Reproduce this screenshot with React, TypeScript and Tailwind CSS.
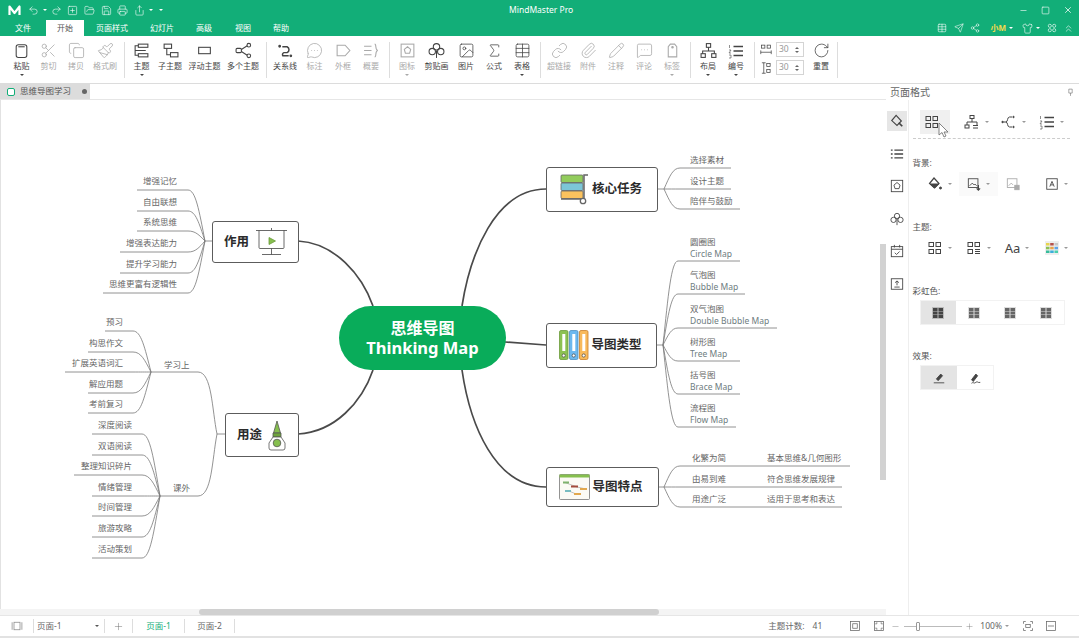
import { ReactNode } from 'react'
import {
  ChevronsUp, Copy, Image, Link, MessageCircleMore, MessageSquareMore, Minus, Paintbrush, Paperclip,
  Pencil, Plus, RotateCw, Scissors, Send, Share2, Shirt, Sigma, Table, X, Square,
  Undo2, Redo2, Printer, FolderOpen, Save, SquarePlus, Share,
} from 'lucide-react'

const FONT = '"Noto Sans", "Noto Sans CJK SC", sans-serif'

function G({ children, size = 16, className = '' }: { children: ReactNode; size?: number; className?: string }) {
  return (
    <svg width={size} height={size} viewBox="0 0 16 16" fill="none" stroke="currentColor" strokeWidth="1" className={className}>
      {children}
    </svg>
  )
}

function Caret({ className = '' }: { className?: string }) {
  return <span className={`w-0 h-0 border-x-[2px] border-x-transparent border-t-[2.5px] border-t-current ${className}`} />
}

const GridIcon = () => (
  <G>
    <rect x="2" y="2.5" width="4.5" height="4" /><rect x="9" y="2.5" width="4.5" height="4" />
    <rect x="2" y="9.5" width="4.5" height="4" /><rect x="9" y="9.5" width="4.5" height="4" />
  </G>
)
const OrgIcon = () => (
  <G><rect x="6" y="1.5" width="4" height="3" /><path d="M8 4.500V8M3 11V8H13V11" /><rect x="1" y="11" width="4" height="3" /><path d="M9 11.500h5M9 14h5" /></G>
)
const BranchIcon = () => (
  <G><path d="M1 8h4M5 8c2 0 1-5 3.500-5H11M5 8c2 0 1 5 3.500 5H11" /><circle cx="1.500" cy="8" r=".7" fill="currentColor" /><circle cx="12.500" cy="3" r=".7" fill="currentColor" /><circle cx="12.500" cy="13" r=".7" fill="currentColor" /></G>
)
const NumberIcon = () => (
  <G><path d="M5.500 3.500H15M5.500 8H15M5.500 12.500H15" strokeWidth="1.500" /><path d="M1.500 2v3M1 7h2L1 10h2M1 12h2v3H1" strokeWidth=".6" /></G>
)
const FillIcon = () => (
  <G><path d="M7 2 12 7.500 7.500 12 2.500 7.500Z" strokeWidth="1.200" /><path d="M3.500 8h8l-4 4Z" fill="currentColor" /><circle cx="13.500" cy="12" r="1" fill="currentColor" /></G>
)

type Item = { label: string; icon: ReactNode; w: string; off?: boolean; caret?: boolean }
const lc = { size: 17, strokeWidth: 1.1 }

const GROUPS: Item[][] = [
  [
    { label: '粘贴', w: 'w-[27px]', caret: true, icon: <G size={17}><rect x="3" y="2.500" width="10" height="12" rx="2" /><path d="M5 4.500h6" /></G> },
    { label: '剪切', w: 'w-[27px]', off: true, icon: <Scissors {...lc} /> },
    { label: '拷贝', w: 'w-[28px]', off: true, icon: <Copy {...lc} /> },
    { label: '格式刷', w: 'w-[30px]', off: true, icon: <Paintbrush {...lc} /> },
  ],
  [
    { label: '主题', w: 'w-[27px]', caret: true, icon: <G size={17}><rect x="5" y="2" width="9" height="3" /><rect x="5" y="11" width="9" height="3" /><path d="M5 3.500H2V12.500H5M2 8h10" /></G> },
    { label: '子主题', w: 'w-[30px]', icon: <G size={17}><rect x="2" y="2" width="7" height="4" /><rect x="8" y="10" width="7" height="4" /><path d="M4.500 6v6H8" /></G> },
    { label: '浮动主题', w: 'w-[39px]', icon: <G size={17}><rect x="2.500" y="5" width="11" height="6" /></G> },
    { label: '多个主题', w: 'w-[38px]', icon: <G size={17}><rect x="1" y="6" width="5" height="4" rx="1" /><circle cx="13" cy="3" r="1.700" /><circle cx="13" cy="13" r="1.700" /><path d="M6 7 11.500 3.500M6 9l5.500 3.500" /></G> },
  ],
  [
    { label: '关系线', w: 'w-[30px]', icon: <G size={17}><path d="M5 4.500h4.500a3 3 0 0 1 0 5.500H6.500a2 2 0 0 0-1 3H11" strokeWidth="1.400" /><circle cx="2.500" cy="4" r=".8" fill="currentColor" /><circle cx="13" cy="13" r=".8" fill="currentColor" /></G> },
    { label: '标注', w: 'w-[29px]', off: true, icon: <MessageCircleMore {...lc} /> },
    { label: '外框', w: 'w-[28px]', off: true, icon: <G size={17}><path d="M2 3h7.500L14 8l-4.500 5H2Z" /></G> },
    { label: '概要', w: 'w-[28px]', off: true, icon: <G size={17}><path d="M1 4h7M1 8h7M1 12h7M11 2c2 0 0 6 3 6-3 0-1 6-3 6" /></G> },
  ],
  [
    { label: '图标', w: 'w-[28px]', off: true, caret: true, icon: <G size={17}><rect x="2" y="2" width="12" height="12" /><path d="M8 4.500 11 7l-1 3.500H6L5 7Z" /></G> },
    { label: '剪贴画', w: 'w-[31px]', icon: <G size={17}><circle cx="8" cy="4.500" r="3" /><circle cx="4" cy="9" r="3" /><circle cx="12" cy="9" r="3" /><path d="M8 8v7" /></G> },
    { label: '图片', w: 'w-[28px]', icon: <Image {...lc} /> },
    { label: '公式', w: 'w-[28px]', icon: <Sigma {...lc} /> },
    { label: '表格', w: 'w-[28px]', caret: true, icon: <Table {...lc} /> },
  ],
  [
    { label: '超链接', w: 'w-[30px]', off: true, icon: <Link {...lc} /> },
    { label: '附件', w: 'w-[28px]', off: true, icon: <Paperclip {...lc} /> },
    { label: '注释', w: 'w-[28px]', off: true, icon: <Pencil {...lc} /> },
    { label: '评论', w: 'w-[28px]', off: true, icon: <MessageSquareMore {...lc} /> },
    { label: '标签', w: 'w-[28px]', off: true, caret: true, icon: <G size={17}><path d="M4 14V4.500L6 2h4l2 2.500V14Z" /><circle cx="8" cy="5" r=".7" fill="currentColor" /></G> },
  ],
  [
    { label: '布局', w: 'w-[28px]', caret: true, icon: <G size={17}><rect x="6" y="1.500" width="4" height="3.500" /><path d="M8 5v3.500M2.500 11V8.500H13.500V11" /><rect x="1" y="11" width="4" height="3.500" /><rect x="11" y="11" width="4" height="3.500" /></G> },
    { label: '编号', w: 'w-[28px]', caret: true, icon: <NumberIcon /> },
  ],
]

function RibbonItem({ item }: { item: Item }) {
  return (
    <div className={`${item.w} relative flex flex-col items-center shrink-0 pt-[5px] ${item.off ? 'text-[#a9a9a9]' : 'text-[#444]'}`}>
      <div className="h-[19px] flex items-center justify-center">{item.icon}</div>
      <span className="text-[8px] leading-[12px] whitespace-nowrap">{item.label}</span>
      {item.caret && <Caret className="mt-[2px]" />}
    </div>
  )
}

function Spin({ icon }: { icon: ReactNode }) {
  return (
    <div className="flex items-center gap-[3px] h-[15px]">
      <div className="w-[14px] flex justify-center text-[#444]">{icon}</div>
      <div className="w-[28px] h-[15px] border border-[#d4d4d4] flex items-center justify-between pl-[2px] pr-[4px] text-[8.5px] text-[#999]">
        30
        <span className="flex flex-col gap-[2px] text-[#666]">
          <Caret className="rotate-180" />
          <Caret />
        </span>
      </div>
    </div>
  )
}

function Ribbon() {
  return (
    <div className="h-[48px] shrink-0 bg-white border-b border-[#dcdcdc] flex pl-[8px]">
      {GROUPS.map((group, i) => (
        <div key={i} className="flex">
          {group.map((item) => <RibbonItem key={item.label} item={item} />)}
          <div className="w-px h-[36px] mt-[6px] bg-[#ddd] mx-[3.500px] shrink-0" />
        </div>
      ))}
      <div className="flex flex-col gap-[3px] pt-[6px] ml-[1px]">
        <Spin icon={<G size={12}><rect x="2" y="1.500" width="4.500" height="4" /><rect x="9.500" y="1.500" width="4.500" height="4" /><path d="M1 11h14M1 8.500v5M15 8.500v5" /></G>} />
        <Spin icon={<G size={12}><rect x="9" y="2" width="4.500" height="4" /><rect x="9" y="10" width="4.500" height="4" /><path d="M5 1v14M2.500 1h5M2.500 15h5" /></G>} />
      </div>
      <div className="w-[32px] ml-[1px] flex flex-col items-center pt-[5px] text-[#444]">
        <div className="h-[19px] flex items-center"><RotateCw size={17} strokeWidth={1.1} /></div>
        <span className="text-[8px] leading-[12px]">重置</span>
      </div>
      <div className="w-px h-[36px] mt-[6px] bg-[#ddd]" />
    </div>
  )
}

const TABS: [string, string][] = [
  ['文件', 'w-[46px]'], ['开始', 'w-[38px]'], ['页面样式', 'w-[56px]'], ['幻灯片', 'w-[44px]'],
  ['高级', 'w-[40px]'], ['视图', 'w-[38px]'], ['帮助', 'w-[38px]'],
]

function TitleBar() {
  const q = { size: 11, strokeWidth: 1.3 }
  return (
    <div className="h-[36px] shrink-0 bg-[#12ae78] text-white relative">
      <div className="h-[20px] flex items-center pl-[8px] pr-[6px]">
        <svg width="13" height="11" viewBox="0 0 13 11" fill="none" stroke="white" strokeWidth="2.200" strokeLinejoin="round"><path d="M1.500 10V1.500L6.500 8 11.500 1.500V10" /></svg>
        <Undo2 {...q} className="ml-[7px]" /><Caret className="ml-[4px]" />
        <Redo2 {...q} className="ml-[4px]" />
        <SquarePlus {...q} className="ml-[5px]" />
        <FolderOpen {...q} className="ml-[6px]" />
        <Save {...q} className="ml-[6px]" />
        <Printer {...q} className="ml-[5px]" />
        <Share {...q} className="ml-[6px]" /><Caret className="ml-[4px]" /><Caret className="ml-[6px]" />
        <span className="absolute left-[509px] top-[3px] text-[8.500px] leading-[14px]">MindMaster Pro</span>
        <div className="ml-auto flex items-center gap-[13px]">
          <Minus size={9} strokeWidth={1.6} /><Square size={9} strokeWidth={1.6} /><X size={10} strokeWidth={1.8} />
        </div>
      </div>
      <div className="h-[16px] flex items-stretch">
        {TABS.map(([t, w], i) => (
          <div key={t} className={`${w} flex items-center justify-center text-[8px] ${i === 1 ? 'bg-white text-[#555]' : ''}`}>{t}</div>
        ))}
        <div className="ml-auto flex items-center pr-[5px]">
          <Table size={10} strokeWidth={1.4} />
          <Send size={10} strokeWidth={1.3} className="ml-[7px]" />
          <Share2 size={10} strokeWidth={1.3} className="ml-[6px]" />
          <span className="ml-[10px] text-[8px] font-bold text-[#f2d94e]">小M</span>
          <Caret className="ml-[3px]" />
          <Shirt size={11} strokeWidth={1.3} className="ml-[9px]" />
          <Caret className="ml-[3px]" />
          <G size={10} className="ml-[7px]"><circle cx="4.500" cy="4.500" r="2.500" /><circle cx="11.500" cy="4.500" r="2.500" /><circle cx="4.500" cy="11.500" r="2.500" /><circle cx="11.500" cy="11.500" r="2.500" /></G>
          <ChevronsUp size={11} strokeWidth={1.3} className="ml-[6px]" />
        </div>
      </div>
    </div>
  )
}

type Leaf = { t: string; x1: number; x2: number; y: number; sub?: string; end?: number }

const HUBS: { hx: number; hy: number; ex: number; side: 'l' | 'r'; leaves: Leaf[] }[] = [
  { hx: 205, hy: 241, ex: 188, side: 'l', leaves: [
    { t: '增强记忆', x1: 137, x2: 188, y: 190, end: 177 },
    { t: '自由联想', x1: 137, x2: 188, y: 211, end: 177 },
    { t: '系统思维', x1: 137, x2: 188, y: 231, end: 177 },
    { t: '增强表达能力', x1: 120, x2: 188, y: 252, end: 177 },
    { t: '提升学习能力', x1: 120, x2: 188, y: 273, end: 177 },
    { t: '思维更富有逻辑性', x1: 103, x2: 188, y: 293, end: 177 },
  ] },
  { hx: 151, hy: 372, ex: 133, side: 'l', leaves: [
    { t: '预习', x1: 105, x2: 133, y: 331, end: 123 },
    { t: '构思作文', x1: 88, x2: 133, y: 352, end: 123 },
    { t: '扩展英语词汇', x1: 65, x2: 133, y: 372, end: 123 },
    { t: '解应用题', x1: 88, x2: 133, y: 393, end: 123 },
    { t: '考前复习', x1: 88, x2: 133, y: 413, end: 123 },
  ] },
  { hx: 160, hy: 496, ex: 142, side: 'l', leaves: [
    { t: '深度阅读', x1: 92, x2: 142, y: 434, end: 132 },
    { t: '双语阅读', x1: 92, x2: 142, y: 455, end: 132 },
    { t: '整理知识碎片', x1: 74, x2: 142, y: 475, end: 132 },
    { t: '情绪管理', x1: 92, x2: 142, y: 496, end: 132 },
    { t: '时间管理', x1: 92, x2: 142, y: 516, end: 132 },
    { t: '旅游攻略', x1: 92, x2: 142, y: 537, end: 132 },
    { t: '活动策划', x1: 92, x2: 142, y: 558, end: 132 },
  ] },
  { hx: 664, hy: 189, ex: 680, side: 'r', leaves: [
    { t: '选择素材', x1: 680, x2: 731, y: 168 },
    { t: '设计主题', x1: 680, x2: 731, y: 189 },
    { t: '陪伴与鼓励', x1: 680, x2: 740, y: 209 },
  ] },
  { hx: 663, hy: 345, ex: 678, side: 'r', leaves: [
    { t: '圆圈图', sub: 'Circle Map', x1: 678, x2: 740, y: 261 },
    { t: '气泡图', sub: 'Bubble Map', x1: 678, x2: 745, y: 294 },
    { t: '双气泡图', sub: 'Double Bubble Map', x1: 678, x2: 777, y: 328 },
    { t: '树形图', sub: 'Tree Map', x1: 678, x2: 740, y: 361 },
    { t: '括号图', sub: 'Brace Map', x1: 678, x2: 740, y: 394 },
    { t: '流程图', sub: 'Flow Map', x1: 678, x2: 736, y: 427 },
  ] },
  { hx: 664, hy: 487, ex: 680, side: 'r', leaves: [
    { t: '化繁为简', x1: 680, x2: 850, y: 466 },
    { t: '由易到难', x1: 680, x2: 842, y: 487 },
    { t: '用途广泛', x1: 680, x2: 842, y: 507 },
  ] },
]

const EXTRA: [string, number, number][] = [
  ['基本思维&几何图形', 767, 458], ['符合思维发展规律', 767, 479], ['适用于思考和表达', 767, 499],
  ['学习上', 164, 365], ['课外', 173, 488],
]

function linkPath(hx: number, hy: number, ex: number, y: number, far: number) {
  const c1x = hx + (ex - hx) * 0.35
  const c1y = hy + (y - hy) * 0.6
  const c2x = hx + (ex - hx) * 0.55
  return `M${hx} ${hy} C${c1x} ${c1y} ${c2x} ${y} ${ex} ${y} L${far} ${y}`
}

function Lines() {
  return (
    <svg width="880" height="509" viewBox="0 100 880 509" fill="none" className="absolute left-0 top-0">
      <g stroke="#777" strokeWidth="0.8">
        {HUBS.map((h) => h.leaves.map((l) => (
          <path key={l.t} d={linkPath(h.hx, h.hy, h.ex, l.y, h.side === 'l' ? l.x1 : l.x2)} />
        )))}
        <path d="M212 241H205M225 434H217" />
        <path d="M217 434C212 410 212 372 198 372H164L151 372" />
        <path d="M217 434C212 460 212 496 198 496H160" />
        <path d="M657 189H664M656 345H663M658 487H664" />
      </g>
      <g stroke="#4a4a4a" strokeWidth="1.700">
        <path d="M298 241C335 243 362 275 373 306" />
        <path d="M298 434C335 432 362 402 373 370" />
        <path d="M462 306C470 255 495 189 546 189" />
        <path d="M505 342L546 345" />
        <path d="M462 370C470 425 495 487 546 487" />
      </g>
    </svg>
  )
}

function Cart() {
  return (
    <svg width="28" height="31" viewBox="0 0 28 31" stroke="#666" strokeWidth="0.8">
      <rect x="1" y="1" width="22" height="7.500" rx="1" fill="#92cc5c" />
      <rect x="1" y="9" width="22" height="7.500" rx="1" fill="#7cc6d8" />
      <rect x="1" y="17" width="22" height="7.500" rx="1" fill="#fbc25e" />
      <path d="M28 1h-4v24H1" fill="none" strokeWidth="1.500" />
      <circle cx="23" cy="27" r="2.700" fill="white" strokeWidth="1.300" />
    </svg>
  )
}

function Binders() {
  const colors: [string, string][] = [['#8cc152', '#6c9a3a'], ['#6db8ef', '#4f8fc0'], ['#f8b95b', '#c97f2c']]
  return (
    <svg width="30" height="31" viewBox="0 0 30 31" strokeWidth="0.8">
      {colors.map(([c, s], i) => (
        <g key={c} transform={`translate(${i * 10},0)`}>
          <rect x="0.500" y="0.500" width="8.500" height="29" rx="1.500" fill={c} stroke={s} />
          <rect x="3.300" y="4" width="3" height="17" fill="white" stroke="none" />
          <circle cx="4.700" cy="25.500" r="1.600" fill="white" stroke="#555" />
        </g>
      ))}
    </svg>
  )
}

function Gantt() {
  return (
    <svg width="31" height="26" viewBox="0 0 31 26">
      <rect x="0.500" y="0.500" width="30" height="25" rx="1" fill="#fbfaf4" stroke="#777" strokeWidth="0.8" />
      <rect x="0.500" y="0.500" width="30" height="3" fill="#86bf4e" />
      <path d="M6 8.500 18 13 27 15M10 17 17 20" stroke="#999" strokeWidth="0.6" fill="none" />
      <rect x="4" y="7.500" width="6" height="2" fill="#7eb26d" />
      <rect x="12" y="11.500" width="7" height="2" fill="#a44b3c" />
      <rect x="21" y="14" width="7" height="2" fill="#e2a84e" />
      <rect x="6" y="16" width="6" height="2" fill="#78bcc0" />
      <rect x="15" y="19" width="7" height="2" fill="#e2a84e" />
    </svg>
  )
}

function Board() {
  return (
    <svg width="31" height="28" viewBox="0 0 31 28" fill="none" stroke="#444" strokeWidth="0.8">
      <path d="M0 2.500H31M15.500 0V2.500M3 2.500V19.500Q3 20.500 4 20.500H27Q28 20.500 28 19.500V2.500M15.500 20.500V26.500M6 26.500H25" />
      <path d="M13 9.500 19.500 13 13 16.500Z" fill="#86bf4e" stroke="#6b9b3b" />
    </svg>
  )
}

function Glue() {
  return (
    <svg width="20" height="31" viewBox="0 0 20 31" stroke="#555" strokeWidth="0.8">
      <path d="M10 1 13.500 13h-7Z" fill="#86bf4e" />
      <path d="M6 13h8v4H6Z" fill="#6ea33c" />
      <path d="M6 17 2 23v5a2 2 0 0 0 2 2h12a2 2 0 0 0 2-2v-5l-4-6Z" fill="white" />
      <circle cx="10" cy="23" r="3.800" fill="#86bf4e" />
    </svg>
  )
}

function Node({ pos, children }: { pos: string; children: ReactNode }) {
  return (
    <div className={`absolute ${pos} bg-white border-[1.500px] border-[#5c5c5c] rounded-[3px] flex items-center justify-center font-bold text-[#2b2b2b] text-[12.500px] whitespace-nowrap`}>
      {children}
    </div>
  )
}

function MapText({ t, left, top, right, gray }: { t: string; left?: number; top: number; right?: number; gray?: boolean }) {
  return (
    <span
      className={`absolute text-[8.500px] leading-[12px] whitespace-nowrap ${gray ? 'text-[#6e7c80]' : 'text-[#666]'}`}
      style={{ left, right, top }}
    >
      {t}
    </span>
  )
}

function Canvas() {
  return (
    <div className="relative flex-1 bg-white shadow-[inset_1px_0_0_#e2e2e2] overflow-hidden">
      <Lines />
      {HUBS.map((h) => h.leaves.map((l) => {
        if (l.sub) {
          return (
            <div key={l.t}>
              <MapText t={l.t} left={690} top={l.y - 125} />
              <MapText t={l.sub} left={690} top={l.y - 113} gray />
            </div>
          )
        }
        if (h.side === 'l') return <MapText key={l.t} t={l.t} right={886 - (l.end ?? 0)} top={l.y - 115} />
        return <MapText key={l.t} t={l.t} left={h.hy === 487 ? 692 : 690} top={l.y - 114} />
      }))}
      {EXTRA.map(([t, x, y]) => <MapText key={t} t={t} left={x} top={y - 106} />)}

      <div className="absolute left-[339px] top-[206px] w-[167px] h-[64px] rounded-[32px] bg-[#09ac5a] text-white font-bold text-[16px] leading-[20px] flex flex-col items-center justify-center">
        <span>思维导图</span>
        <span className="text-[16.500px]">Thinking Map</span>
      </div>

      <Node pos="left-[212px] top-[121px] w-[87px] h-[42px] gap-[7px]"><span>作用</span><Board /></Node>
      <Node pos="left-[225px] top-[313px] w-[74px] h-[44px] gap-[5px]"><span>用途</span><Glue /></Node>
      <Node pos="left-[546px] top-[67px] w-[112px] h-[45px] gap-[4px] pr-[2px]"><Cart /><span>核心任务</span></Node>
      <Node pos="left-[546px] top-[223px] w-[111px] h-[45px] gap-[2px] pr-[2px]"><Binders /><span>导图类型</span></Node>
      <Node pos="left-[546px] top-[367px] w-[113px] h-[40px] gap-[2px] pr-[3px]"><Gantt /><span>导图特点</span></Node>

      <div className="absolute right-0 top-[144px] w-[6px] h-[236px] bg-[#d2d2d2]" />
    </div>
  )
}

function Cell({ icon, caret = true, bg = '' }: { icon: ReactNode; caret?: boolean; bg?: string }) {
  return (
    <div className={`w-[39px] h-[24px] flex items-center justify-center gap-[5px] text-[#444] ${bg}`}>
      {icon}
      {caret ? <Caret className="text-[#999]" /> : <span className="w-[4px]" />}
    </div>
  )
}

function Rainbow({ dark }: { dark?: boolean }) {
  return (
    <svg width="12" height="12" viewBox="0 0 12 12" fill={dark ? '#444' : '#666'}>
      <rect width="12" height="12" fill={dark ? '#bbb' : '#ddd'} />
      <rect x="1" y="1" width="4.500" height="3" /><rect x="6.500" y="1" width="4.500" height="3" />
      <rect x="1" y="4.500" width="4.500" height="3" /><rect x="6.500" y="4.500" width="4.500" height="3" />
      <rect x="1" y="8" width="4.500" height="3" /><rect x="6.500" y="8" width="4.500" height="3" />
    </svg>
  )
}

const SIDE: ReactNode[] = [
  <G key="a" size={14}><path d="M7 1.500 13 8 8 13 2 7.500Z" strokeWidth="1.300" /><path d="M10 10l4 4" strokeWidth="2" /></G>,
  <G key="b" size={14}><path d="M5 3.500H15M5 8H15M5 12.500H15" strokeWidth="1.500" /><path d="M1 3.500h2M1 8h2M1 12.500h2" strokeWidth="1.500" /></G>,
  <G key="c" size={14}><rect x="1.500" y="1.500" width="13" height="13" /><path d="M8 4 11.500 7l-1.200 4H5.700L4.500 7Z" /></G>,
  <G key="d" size={14}><circle cx="8" cy="4.500" r="3" /><circle cx="4" cy="9" r="3" /><circle cx="12" cy="9" r="3" /><path d="M8 8v7" /></G>,
  <G key="e" size={14}><rect x="1.500" y="3" width="13" height="11.500" /><path d="M1.500 6H14.500M5 1v3M11 1v3M5.500 10l2 2 3.500-3.500" /></G>,
  <G key="f" size={14}><rect x="1.500" y="2" width="13" height="12" /><path d="M8 4.500v5M5.800 6.500 8 4.500l2.200 2M5 11.500h6" /></G>,
]

function Panel() {
  return (
    <aside className="w-[193px] shrink-0 bg-white flex text-[#555] relative">
      <div className="w-[22px] shrink-0 flex flex-col items-center pt-[11px]">
        {SIDE.map((icon, i) => (
          <div key={i} className={`w-[20px] h-[20px] mb-[12.500px] flex items-center justify-center text-[#444] ${i === 0 ? 'bg-[#e6e6e6]' : ''}`}>{icon}</div>
        ))}
      </div>
      <div className="flex-1 border-l border-[#eee] pl-[3.500px] pr-[10px] pt-[10px] text-[8.500px]">
        <div className="flex pl-[7px] pb-[4px] border-b border-dashed border-[#ccc] w-[157px] ml-[0.500px]">
          <div className="w-[39px] h-[24px]">
            <div className="w-[30px] h-[24px] bg-[#f0f0f0] flex items-center gap-[5px] pl-[4px] text-[#444]">
              <GridIcon />
            </div>
          </div>
          <Cell icon={<OrgIcon />} />
          <Cell icon={<BranchIcon />} />
          <Cell icon={<NumberIcon />} />
        </div>
        <p className="mt-[18px] leading-[12px]">背景:</p>
        <div className="flex pl-[7px] mt-[3px]">
          <Cell icon={<FillIcon />} />
          <Cell icon={<G size={14}><rect x="1.500" y="2" width="11" height="10" /><path d="M3 10l3-3 2 2 1-1 2 2" /><path d="M13 9v6M11 13l2 2 2-2" strokeWidth="1.300" /></G>} bg="bg-[#fafafa]" />
          <Cell caret={false} icon={<G size={14} className="text-[#aaa]"><rect x="1.500" y="2" width="11" height="10" /><path d="M3 10l3-3 2 2" /><rect x="10" y="9.500" width="5" height="5" fill="#aaa" /></G>} />
          <Cell icon={<G size={14}><rect x="2" y="2" width="12" height="12" /><path d="M5.500 11 8 5l2.500 6M6.500 9h3" /></G>} />
        </div>
        <p className="mt-[25px] leading-[12px]">主题:</p>
        <div className="flex pl-[7px] mt-[3px]">
          <Cell icon={<GridIcon />} />
          <Cell icon={<G><rect x="2" y="2.500" width="4.500" height="4" /><rect x="9" y="2.500" width="4.500" height="4" /><rect x="2" y="9.500" width="4.500" height="4" /><path d="M9 9.500h5M9 11.500h5M9 13.500h5" /></G>} />
          <Cell icon={<span className="text-[13px] leading-none text-[#444]">Aa</span>} />
          <Cell icon={
            <svg width="14" height="14" viewBox="0 0 14 14">
              <rect width="14" height="14" fill="#eee" />
              <rect x="1" y="2" width="3.500" height="2.500" fill="#e8d44d" /><rect x="5.200" y="2" width="3.500" height="2.500" fill="#b5514a" /><rect x="9.500" y="2" width="3.500" height="2.500" fill="#c8c8c8" />
              <rect x="1" y="5.800" width="3.500" height="2.500" fill="#8cc152" /><rect x="5.200" y="5.800" width="3.500" height="2.500" fill="#e8a64d" /><rect x="9.500" y="5.800" width="3.500" height="2.500" fill="#5da5e8" />
              <rect x="1" y="9.500" width="3.500" height="2.500" fill="#37bc9b" /><rect x="5.200" y="9.500" width="3.500" height="2.500" fill="#3bafda" /><rect x="9.500" y="9.500" width="3.500" height="2.500" fill="#48cfad" />
            </svg>
          } />
        </div>
        <p className="mt-[25px] leading-[12px]">彩虹色:</p>
        <div className="flex ml-[7px] mt-[3px] w-[145px] h-[25px] border border-[#f2f2f2]">
          {[0, 1, 2, 3].map((i) => (
            <div key={i} className={`w-[36px] flex items-center justify-center ${i === 0 ? 'bg-[#e4e4e4]' : ''}`}><Rainbow dark={i === 0} /></div>
          ))}
        </div>
        <p className="mt-[25px] leading-[12px]">效果:</p>
        <div className="flex ml-[7px] mt-[3px] w-[74px] h-[25px] border border-[#f2f2f2] text-[#444]">
          <div className="w-[36px] flex items-center justify-center bg-[#e4e4e4]"><G size={14}><path d="M5 9 10 3.500 12 5.500 7 11Z" fill="currentColor" /><path d="M2 13.500H14" /></G></div>
          <div className="w-[36px] flex items-center justify-center"><G size={14}><path d="M4 10 9 3.500 11 5.500 6 12Z" fill="currentColor" /><path d="M4 14c2-2 3 1 5-1s2 1 5 0" /></G></div>
        </div>
      </div>
      <svg width="11" height="17" viewBox="0 0 11 17" className="absolute left-[52px] top-[22px]">
        <path d="M1 1V13L4 10.500 6 15 8 14 6 10H10Z" fill="white" stroke="#666" strokeWidth="0.8" />
      </svg>
    </aside>
  )
}

function StatusBar() {
  const Sep = () => <div className="w-px h-[14px] bg-[#ddd] shrink-0" />
  return (
    <div className="h-[23px] shrink-0 bg-white border-t border-[#e6e6e6] border-b-2 border-b-[#e2e2e2] flex items-center text-[8.500px] text-[#666]">
      <div className="w-[33px] flex justify-center"><G size={12} className="text-[#888]"><rect x="4" y="3" width="8" height="10" /><path d="M1.500 3v10M14.500 3v10" /></G></div>
      <Sep />
      <div className="w-[70px] flex items-center justify-between pl-[3px] pr-[5px]">页面-1<Caret className="text-[#555]" /></div>
      <Sep />
      <div className="w-[27px] flex justify-center"><Plus size={11} strokeWidth={1} /></div>
      <Sep />
      <div className="w-[51px] text-center text-[#12ae78]">页面-1</div>
      <Sep />
      <div className="w-[49px] text-center">页面-2</div>
      <Sep />
      <div className="ml-auto flex items-center pr-[5px]">
        <span>主题计数:</span>
        <span className="ml-[8px]">41</span>
        <G size={12} className="ml-[27px]"><rect x="2" y="2" width="12" height="12" /><rect x="5" y="5" width="6" height="6" /></G>
        <G size={12} className="ml-[12px]"><rect x="2" y="2" width="12" height="12" /><path d="M4 6V4h2M10 4h2v2M4 10v2h2M10 12h2v-2" /></G>
        <Minus size={9} strokeWidth={1} className="ml-[6px]" />
        <div className="relative w-[58px] h-px bg-[#bbb] ml-[4px]">
          <span className="absolute left-[12px] top-[-4px] w-[4px] h-[9px] bg-white border border-[#999] rounded-[1px]" />
        </div>
        <Plus size={9} strokeWidth={1} className="ml-[3px]" />
        <span className="ml-[6px]">100%</span>
        <Caret className="ml-[3px] text-[#999]" />
        <G size={12} className="ml-[13px]"><rect x="5" y="6" width="6" height="4" /><path d="M2 5V2h3M11 2h3v3M2 11v3h3M11 14h3v-3" /></G>
        <G size={12} className="ml-[11px]"><rect x="2" y="2" width="12" height="12" /><path d="M4 8h8" /></G>
        <span className="ml-[11px] w-[6px]" />
      </div>
    </div>
  )
}

export default function App() {
  return (
    <div className="w-screen h-screen flex flex-col overflow-hidden bg-white" style={{ fontFamily: FONT }}>
      <TitleBar />
      <Ribbon />
      <div className="flex-1 flex min-h-0">
        <div className="w-[886px] shrink-0 flex flex-col">
          <div className="h-[16px] shrink-0 border-b border-[#e6e6e6] flex">
            <div className="w-[90px] bg-[#dcdcdc] flex items-center pl-[7px] gap-[5px] text-[8.500px] text-[#555]">
              <span className="w-[8px] h-[8px] border border-[#12ae78] rounded-[2px] bg-white" />
              思维导图学习
              <span className="w-[5px] h-[5px] rounded-full bg-[#666] ml-[6px]" />
            </div>
          </div>
          <Canvas />
          <div className="h-[6px] shrink-0 bg-[#f4f4f4] relative">
            <div className="absolute left-[199px] top-0 w-[460px] h-[6px] rounded-[3px] bg-[#d0d0d0]" />
          </div>
        </div>
        <div className="flex-1 flex flex-col min-w-0">
          <div className="h-[16px] shrink-0 flex items-center justify-between pl-[4px] pr-[4px] text-[10px] text-[#666]">
            页面格式
            <G size={9}><path d="M5 2h6v7H5ZM8 9v5" /></G>
          </div>
          <div className="flex-1 min-h-0 flex"><Panel /></div>
        </div>
      </div>
      <StatusBar />
    </div>
  )
}
